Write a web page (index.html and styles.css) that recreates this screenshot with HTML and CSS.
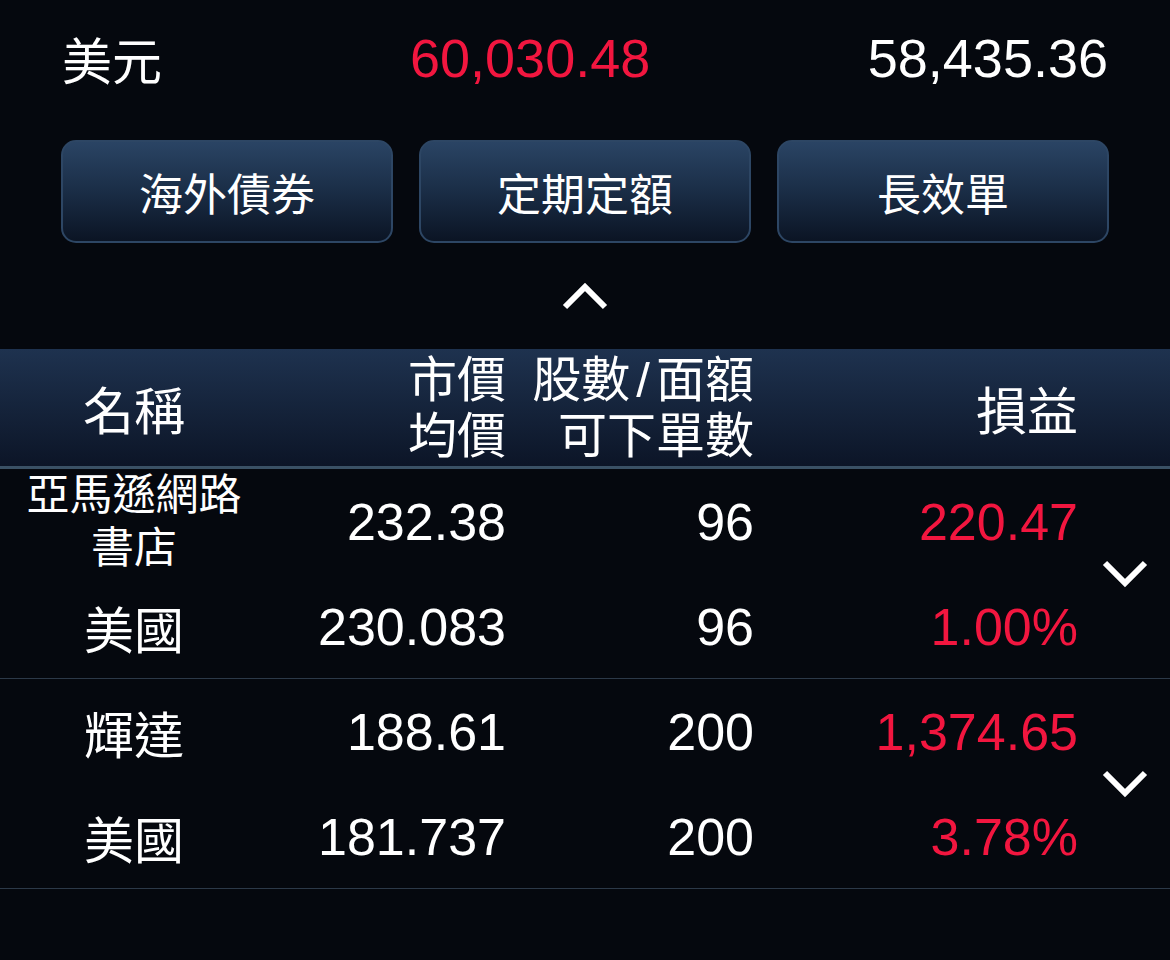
FILE: index.html
```html
<!DOCTYPE html>
<html lang="zh-Hant">
  <head>
    <meta charset="UTF-8" />
    <meta name="viewport" content="width=device-width, initial-scale=1.0" />
    <title>庫存</title>
    <link rel="stylesheet" href="styles.css">
  </head>
  <body>
    <div class="summary">
      <span class="currency">美元</span>
      <span class="amount up">60,030.48</span>
      <span class="amount total">58,435.36</span>
    </div>

    <div class="actions">
      <button class="action">海外債券</button>
      <button class="action">定期定額</button>
      <button class="action">長效單</button>
    </div>

    <div class="collapse">
      <svg class="chevron-up" width="46" height="28" viewBox="0 0 46 28">
        <path d="M3 25 L23 5 L43 25" fill="none" stroke="#fff" stroke-width="6" />
      </svg>
    </div>

    <div class="table-head">
      <div class="cell name">名稱</div>
      <div class="cell num stack"><span>市價</span><span>均價</span></div>
      <div class="cell num stack"><span>股數<span class="slash">/</span>面額</span><span>可下單數</span></div>
      <div class="cell num">損益</div>
      <div class="cell"></div>
    </div>

    <div class="holding">
      <div class="cell name small">亞馬遜網路<br>書店</div>
      <div class="cell num">232.38</div>
      <div class="cell num">96</div>
      <div class="cell num up">220.47</div>
      <div class="cell toggle">
        <svg width="46" height="28" viewBox="0 0 46 28">
          <path d="M3 3 L23 23 L43 3" fill="none" stroke="#fff" stroke-width="6" />
        </svg>
      </div>
      <div class="cell name">美國</div>
      <div class="cell num">230.083</div>
      <div class="cell num">96</div>
      <div class="cell num up">1.00%</div>
    </div>

    <div class="holding">
      <div class="cell name">輝達</div>
      <div class="cell num">188.61</div>
      <div class="cell num">200</div>
      <div class="cell num up">1,374.65</div>
      <div class="cell toggle">
        <svg width="46" height="28" viewBox="0 0 46 28">
          <path d="M3 3 L23 23 L43 3" fill="none" stroke="#fff" stroke-width="6" />
        </svg>
      </div>
      <div class="cell name">美國</div>
      <div class="cell num">181.737</div>
      <div class="cell num">200</div>
      <div class="cell num up">3.78%</div>
    </div>
  </body>
</html>
```

FILE: styles.css
```css
body {
  margin: 0;
  padding: 0;
  width: 1170px;
  height: 960px;
  overflow: hidden;
  background-color: #05080e;
  color: #fff;
  font-family: "Liberation Sans", "Noto Sans CJK TC", sans-serif;
}

.up {
  color: #f2163f;
}

/* top summary row */
.summary {
  display: grid;
  grid-template-columns: 348px 1fr auto;
  align-items: center;
  height: 116px;
  padding: 0 62px;
  font-size: 54px;
}

.currency {
  font-size: 50px;
}

/* buttons */
.actions {
  display: grid;
  grid-template-columns: repeat(3, 1fr);
  gap: 26px;
  padding: 24px 61px 0;
}

.action {
  height: 103px;
  border: 2px solid #2d4664;
  border-radius: 15px;
  background: linear-gradient(to bottom, #2a4464, #1a2d46 50%, #0b1424);
  color: #fff;
  font-family: "Noto Sans CJK TC", sans-serif;
  font-size: 44px;
  padding: 0;
}

.collapse {
  display: flex;
  justify-content: center;
  align-items: center;
  height: 106px;
}

/* table */
.table-head,
.holding {
  display: grid;
  grid-template-columns: 268px 238px 248px 324px 92px;
}

.table-head {
  height: 117px;
  background: linear-gradient(to bottom, #1e324f, #0c1527);
  border-bottom: 3px solid #3a5165;
  align-items: center;
}

.cell {
  display: flex;
  align-items: center;
  white-space: nowrap;
}

.cell.name {
  justify-content: center;
  text-align: center;
  font-size: 50px;
}

.table-head .cell.name {
  font-size: 51px;
}

.cell.name.small {
  font-size: 43px;
  line-height: 53px;
}

.cell.num {
  justify-content: flex-end;
  font-size: 52px;
}

.table-head .cell.num {
  font-size: 51px;
}

.table-head .cell.stack {
  flex-direction: column;
  align-items: flex-end;
  font-size: 49px;
  line-height: 56px;
}

.slash {
  margin: 0 6px;
}

.holding {
  grid-template-rows: 106px 103px;
  border-bottom: 1px solid #2c3948;
}

.toggle {
  grid-column: 5;
  grid-row: 1 / span 2;
  justify-content: center;
  padding-left: 2px;
}
```
